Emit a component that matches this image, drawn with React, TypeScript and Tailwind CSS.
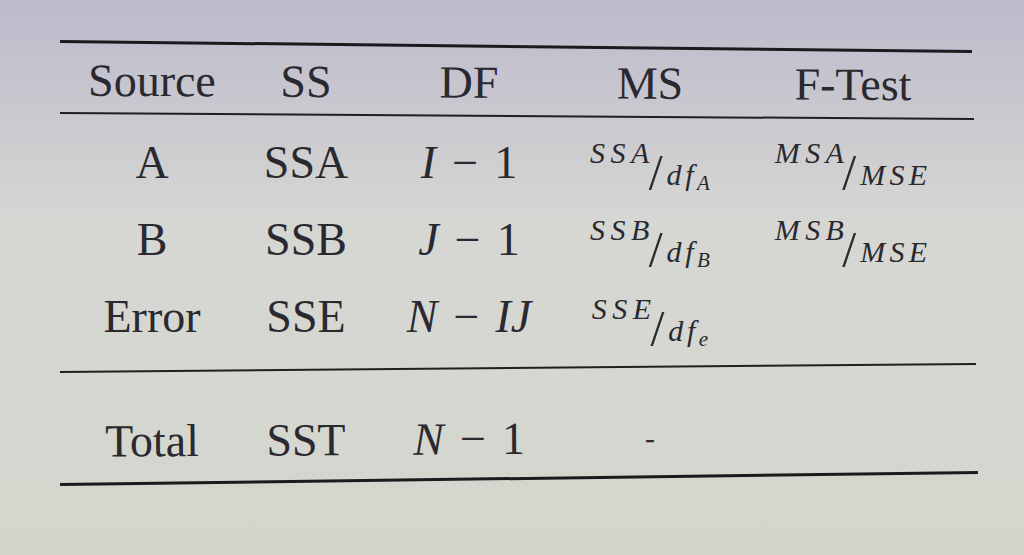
import React from "react";

const cols = "grid grid-cols-[184px_124px_202px_160px_246px] text-center";

function Minus() {
  return <span className="not-italic mx-[16px]">−</span>;
}

// inline fraction like  SSA / df_A  (numerator raised, slash, lowered denominator)
function Frac({ num, den, sub, wide }: { num: string; den: string; sub?: string; wide?: boolean }) {
  return (
    <span className="inline-flex items-start">
      <span className="-mt-[2px] text-[30px] leading-[30px] italic tracking-[0.18em]">{num}</span>
      <span className={`mt-[7px] text-[50px] leading-[50px] font-light ${wide ? "-ml-[7px]" : "-ml-[6px]"}`}>/</span>
      <span className={`mt-[20px] ml-[4px] text-[30px] leading-[30px] italic ${wide ? "tracking-[0.14em]" : "tracking-[0.12em]"}`}>
        {den}
        {sub && (
          <span className="relative top-[5px] text-[21px] tracking-normal">{sub}</span>
        )}
      </span>
    </span>
  );
}

export default function App() {
  return (
    <div
      className="w-full h-[555px] overflow-hidden bg-linear-to-b from-[#bdbacb] via-[#d6d7d3] via-40% to-[#d4d6cd] text-[#2a292f]"
      style={{ fontFamily: '"Liberation Serif", "Times New Roman", serif' }}
    >
      <div className="ml-[60px] w-[916px] pt-[45px]">
        {/* top rule */}
        <div className="w-[912px] h-[3px] bg-[#1b1b1d] rotate-[0.63deg]" />

        {/* header */}
        <div className={`${cols} mt-[12px] h-[46px] text-[46px] leading-[46px] rotate-[0.3deg]`}>
          <div>Source</div>
          <div>SS</div>
          <div>DF</div>
          <div>MS</div>
          <div>F-Test</div>
        </div>

        <div className="mt-[9px] w-[914px] h-[2px] bg-[#1f1f21] rotate-[0.38deg]" />

        {/* body */}
        <div className="mt-[23px] flex flex-col gap-[31px] text-[46px] leading-[46px]">
          <div className={`${cols} h-[46px]`}>
            <div>A</div>
            <div>SSA</div>
            <div>
              <span className="italic">I</span>
              <Minus />1
            </div>
            <div className="flex justify-center">
              <Frac num="SSA" den="df" sub="A" />
            </div>
            <div className="flex justify-center">
              <Frac num="MSA" den="MSE" wide />
            </div>
          </div>

          <div className={`${cols} h-[46px]`}>
            <div>B</div>
            <div>SSB</div>
            <div>
              <span className="italic">J</span>
              <Minus />1
            </div>
            <div className="flex justify-center">
              <Frac num="SSB" den="df" sub="B" />
            </div>
            <div className="flex justify-center">
              <Frac num="MSB" den="MSE" wide />
            </div>
          </div>

          <div className={`${cols} h-[46px]`}>
            <div>Error</div>
            <div>SSE</div>
            <div>
              <span className="italic">N</span>
              <Minus />
              <span className="italic">IJ</span>
            </div>
            <div className="flex justify-center pt-[2px]">
              <Frac num="SSE" den="df" sub="e" />
            </div>
            <div />
          </div>
        </div>

        <div className="mt-[27px] w-[916px] h-[2px] bg-[#1f1f21] -rotate-[0.5deg]" />

        {/* total */}
        <div className={`${cols} mt-[47px] h-[46px] text-[46px] leading-[46px] -rotate-[0.35deg]`}>
          <div>Total</div>
          <div>SST</div>
          <div>
            <span className="italic">N</span>
            <Minus />1
          </div>
          <div className="text-[30px]">-</div>
          <div />
        </div>

        <div className="mt-[15px] w-[918px] h-[3px] bg-[#1b1b1d] -rotate-[0.75deg]" />
      </div>
    </div>
  );
}
